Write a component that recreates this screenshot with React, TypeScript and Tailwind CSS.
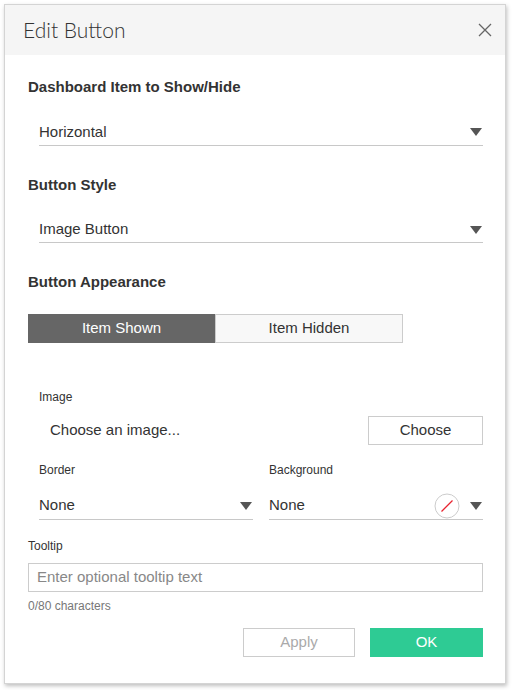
import React from 'react';

function Caret() {
    return (
        <svg width="12" height="8" viewBox="0 0 12 8" className="shrink-0">
            <path d="M0 0 L12 0 L6 8 Z" fill="#555" />
        </svg>
    );
}

function Dropdown({ value, extra, tall }: { value: string; extra?: React.ReactNode; tall?: boolean }) {
    return (
        <div
            className={
                tall
                    ? 'flex h-[29px] items-center justify-between border-b border-[#c8c8c8] pr-[1px] pt-[3px]'
                    : 'flex h-[27px] items-center justify-between border-b border-[#c8c8c8] pr-[1px]'
            }
        >
            <span className="text-[15px] text-[#333]">{value}</span>
            <div className="flex items-center gap-[10px]">
                {extra}
                <Caret />
            </div>
        </div>
    );
}

function NoColorSwatch() {
    return (
        <svg width="26" height="26" viewBox="0 0 26 26">
            <circle cx="13" cy="13" r="12" fill="#fff" stroke="#ccc" strokeWidth="1" />
            <line x1="7.5" y1="18.5" x2="18.5" y2="7.5" stroke="#e8232f" strokeWidth="1.3" />
        </svg>
    );
}

export default function App() {
    return (
        <div
            className="min-h-[690px] bg-white p-[4px] pr-[7px]"
            style={{ fontFamily: '"Liberation Sans", Arial, sans-serif' }}
        >
            <div className="flex h-[680px] flex-col border border-[#d4d4d4] bg-white shadow-[1px_2px_4px_rgba(0,0,0,0.25)]">
                <div className="flex h-[50px] items-center justify-between bg-[#f5f5f5] pl-[18px] pr-[13px]">
                    <span
                        className="text-[21px] font-light text-[#333]"
                        style={{ fontFamily: 'Lato, "Open Sans", sans-serif' }}
                    >
                        Edit Button
                    </span>
                    <svg width="14" height="14" viewBox="0 0 14 14">
                        <path d="M1 1 L13 13 M13 1 L1 13" stroke="#666" strokeWidth="1.3" />
                    </svg>
                </div>

                <div className="flex flex-1 flex-col pl-[23px] pr-[22px]">
                    <div className="mt-[21px] text-[15px] font-bold text-[#333]">
                        Dashboard Item to Show/Hide
                    </div>
                    <div className="mt-[18px] pl-[11px]">
                        <Dropdown value="Horizontal" tall />
                    </div>

                    <div className="mt-[28px] text-[15px] font-bold text-[#333]">Button Style</div>
                    <div className="mt-[18px] pl-[11px]">
                        <Dropdown value="Image Button" tall />
                    </div>

                    <div className="mt-[28px] text-[15px] font-bold text-[#333]">Button Appearance</div>
                    <div className="mt-[20px] flex h-[29px] w-[375px] text-[15px]">
                        <div className="flex w-[187px] items-center justify-center bg-[#666] text-white">
                            Item Shown
                        </div>
                        <div className="flex flex-1 items-center justify-center border border-[#ccc] bg-[#f8f8f8] text-[#333]">
                            Item Hidden
                        </div>
                    </div>

                    <div className="mt-[45px] pl-[11px] text-[12px] text-[#333]">Image</div>
                    <div className="mt-[10px] flex items-center justify-between pl-[22px]">
                        <span className="text-[15px] text-[#333]">Choose an image...</span>
                        <div className="flex h-[29px] w-[115px] items-center justify-center border border-[#ccc] text-[15px] text-[#333]">
                            Choose
                        </div>
                    </div>

                    <div className="mt-[16px] flex gap-[16px] pl-[11px]">
                        <div className="flex-1">
                            <div className="text-[12px] text-[#333]">Border</div>
                            <div className="mt-[14px]">
                                <Dropdown value="None" />
                            </div>
                        </div>
                        <div className="flex-1">
                            <div className="text-[12px] text-[#333]">Background</div>
                            <div className="mt-[14px]">
                                <Dropdown value="None" extra={<NoColorSwatch />} />
                            </div>
                        </div>
                    </div>

                    <div className="mt-[17px] text-[12px] text-[#333]">Tooltip</div>
                    <div className="mt-[8px] flex h-[29px] items-center border border-[#ccc] px-[8px] text-[15px] text-[#888]">
                        Enter optional tooltip text
                    </div>
                    <div className="mt-[5px] text-[12px] text-[#777]">0/80 characters</div>

                    <div className="mt-[13px] flex justify-end gap-[15px]">
                        <div className="flex h-[29px] w-[112px] items-center justify-center border border-[#ccc] text-[15px] text-[#aaa]">
                            Apply
                        </div>
                        <div className="flex h-[29px] w-[113px] items-center justify-center bg-[#2ecb94] text-[15px] text-white">
                            OK
                        </div>
                    </div>
                </div>
            </div>
        </div>
    );
}
